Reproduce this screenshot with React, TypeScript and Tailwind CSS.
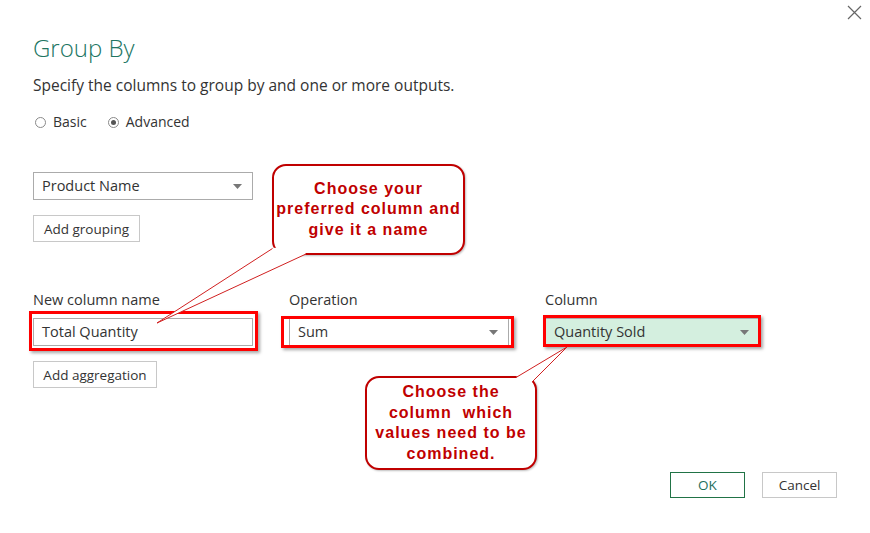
import React from "react";

const Caret = () => (
  <svg width="9" height="5" viewBox="0 0 9 5" className="shrink-0">
    <path d="M0 0h9L4.5 5z" fill="#777" />
  </svg>
);

function Select({ value, className = "" }: { value: string; className?: string }) {
  return (
    <div
      className={`flex h-[28px] items-center justify-between border border-[#ababab] pl-[8px] pr-[10px] text-[14.5px] text-[#333] ${className}`}
    >
      <span>{value}</span>
      <Caret />
    </div>
  );
}

function Button({ label, className = "" }: { label: string; className?: string }) {
  return (
    <button
      className={`flex h-[27px] items-center justify-center whitespace-nowrap border border-[#c8c8c8] bg-white pt-[1px] text-[13.5px] text-[#333] ${className}`}
    >
      {label}
    </button>
  );
}

function Radio({ label, checked }: { label: string; checked?: boolean }) {
  return (
    <label className="flex items-center gap-[7px]">
      <span className="flex h-[11px] w-[11px] items-center justify-center rounded-full border border-[#8a8a8a] bg-white">
        {checked && <span className="h-[5px] w-[5px] rounded-full bg-[#555]" />}
      </span>
      <span>{label}</span>
    </label>
  );
}

function Callout({
  lines,
  className = "",
}: {
  lines: string[];
  className?: string;
}) {
  return (
    <div
      className={`absolute flex flex-col items-center justify-center rounded-[14px] border-2 border-[#c00000] bg-white font-['Liberation_Sans',Arial,sans-serif] text-[16px] font-bold leading-[20.5px] tracking-[1px] text-[#c00000] shadow-[1px_1px_2px_rgba(0,0,0,0.25)] ${className}`}
    >
      {lines.map((l) => (
        <span key={l} className="whitespace-pre">
          {l}
        </span>
      ))}
    </div>
  );
}

export default function App() {
  return (
    <div className="relative h-[533px] w-[870px] overflow-hidden bg-white font-['Open_Sans',sans-serif] text-[#333]">
      <div className="flex justify-end pr-[8px] pt-[5px]">
        <svg width="15" height="15" viewBox="0 0 15 15">
          <path d="M1 1l13 13M14 1L1 14" stroke="#666" strokeWidth="1.2" />
        </svg>
      </div>

      <div className="flex flex-col pl-[33px] pr-[33px]">
        <h1 className="mt-[12px] text-[24px] font-light leading-[32px] text-[#217562]">Group By</h1>
        <p className="mt-[10px] text-[15.5px] leading-[22px]">
          Specify the columns to group by and one or more outputs.
        </p>
        <div className="mt-[16px] flex gap-[21px] pl-[2px] text-[14px] leading-[20px]">
          <Radio label="Basic" />
          <Radio label="Advanced" checked />
        </div>

        <Select value="Product Name" className="mt-[40px] w-[220px]" />
        <Button label="Add grouping" className="mt-[15px] w-[107px]" />

        <div className="mt-[48px] grid grid-cols-[220px_220px_215px] gap-x-[36px] text-[14.5px]">
          <span className="leading-[20px]">New column name</span>
          <span className="leading-[20px]">Operation</span>
          <span className="leading-[20px]">Column</span>
          <div className="mt-[8px] flex h-[28px] items-center border border-[#ababab] px-[8px] text-[14.5px]">
            Total Quantity
          </div>
          <Select value="Sum" className="mt-[8px]" />
          <Select value="Quantity Sold" className="mt-[8px] bg-[#d4efdf]" />
        </div>

        <Button label="Add aggregation" className="mt-[15px] w-[124px]" />

        <div className="mt-[84px] flex justify-end gap-[17px] pr-0">
          <button className="flex h-[26px] w-[75px] items-center justify-center border-[1.5px] border-[#217346] text-[13.5px] text-[#1e6f5c]">
            OK
          </button>
          <button className="flex h-[26px] w-[75px] items-center justify-center border-[1.5px] border-[#c8c8c8] text-[13.5px] text-[#333]">
            Cancel
          </button>
        </div>
      </div>

      {/* annotation highlights */}
      <div className="pointer-events-none absolute left-[29px] top-[311px] h-[40px] w-[229px] border-[3px] border-[#ff0000] shadow-[2px_2px_3px_rgba(0,0,0,0.35)]" />
      <div className="pointer-events-none absolute left-[281px] top-[316px] h-[32px] w-[233px] border-[3px] border-[#ff0000] shadow-[2px_2px_3px_rgba(0,0,0,0.35)]" />
      <div className="pointer-events-none absolute left-[543px] top-[315px] h-[32px] w-[218px] border-[3px] border-[#ff0000] shadow-[2px_2px_3px_rgba(0,0,0,0.35)]" />

      <Callout
        lines={["Choose your", "preferred column and", "give it a name"]}
        className="left-[272px] top-[164px] h-[91px] w-[193px]"
      />
      <Callout
        lines={["Choose the", "column  which", "values need to be", "combined."]}
        className="left-[365px] top-[376px] h-[94px] w-[172px] tracking-[0.6px]"
      />

      <svg className="pointer-events-none absolute left-0 top-0" width="870" height="533">
        <polygon points="272,248 157,323 306,254 300,246" fill="#fff" />
        <path d="M272.5 248.5L157 323L306 254" fill="none" stroke="#d02020" strokeWidth="1" />
        <polygon points="516,377 567,347 532,382 524,386" fill="#fff" />
        <path d="M516 377.5L567 347L532 382" fill="none" stroke="#d02020" strokeWidth="1" />
      </svg>
    </div>
  );
}
